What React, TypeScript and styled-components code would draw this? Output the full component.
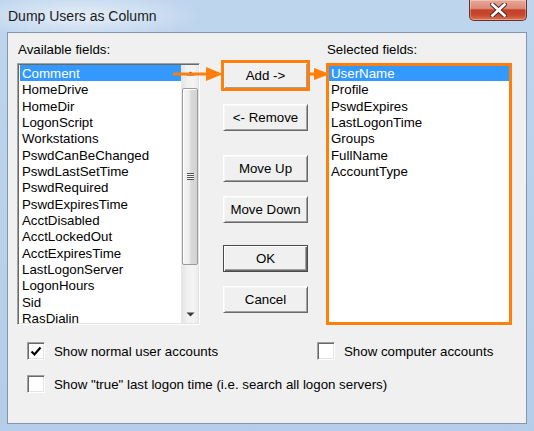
import React from "react";
import styled, { createGlobalStyle, css } from "styled-components";

const availableFields = [
  "Comment",
  "HomeDrive",
  "HomeDir",
  "LogonScript",
  "Workstations",
  "PswdCanBeChanged",
  "PswdLastSetTime",
  "PswdRequired",
  "PswdExpiresTime",
  "AcctDisabled",
  "AcctLockedOut",
  "AcctExpiresTime",
  "LastLogonServer",
  "LogonHours",
  "Sid",
  "RasDialin",
];

const selectedFields = [
  "UserName",
  "Profile",
  "PswdExpires",
  "LastLogonTime",
  "Groups",
  "FullName",
  "AccountType",
];

const ORANGE = "#ff7f0a";

const GlobalStyle = createGlobalStyle`
  html, body {
    margin: 0;
    padding: 0;
  }
  body {
    background: #b9d1ea;
    font-family: "Liberation Sans", Arial, sans-serif;
  }
`;

const Window = styled.div`
  width: 534px;
  height: 431px;
  display: flex;
  flex-direction: column;
  overflow: hidden;
  background: linear-gradient(180deg, #bed5ee 0%, #b9d1ea 45%, #b5cde8 100%);
`;

const TitleBar = styled.div`
  height: 32px;
  flex: none;
  display: flex;
  justify-content: space-between;
  align-items: flex-start;
  padding: 0 7px 0 8px;
  background: radial-gradient(
    ellipse 120px 24px at 82px 16px,
    rgba(255, 255, 255, 0.6),
    rgba(255, 255, 255, 0) 100%
  );
`;

const Title = styled.span`
  margin-top: 8px;
  font-size: 14px;
  line-height: 16px;
  color: #1b1b1b;
`;

const CloseButton = styled.div`
  width: 58px;
  height: 21px;
  box-sizing: border-box;
  display: flex;
  align-items: center;
  justify-content: center;
  border: 1px solid #6e3024;
  border-top: none;
  border-radius: 0 0 5px 5px;
  background: linear-gradient(
    180deg,
    #e8a897 0%,
    #dc8a77 42%,
    #c3412a 50%,
    #c8472e 75%,
    #df7455 100%
  );
  box-shadow: inset 0 0 0 1px rgba(255, 255, 255, 0.3);
`;

const Client = styled.div`
  position: relative;
  flex: 1;
  margin: 0 7px 7px;
  border: 1px solid #8595aa;
  background: #f0f0f0;
  padding: 9px 14px 0 9px;
  display: flex;
  flex-direction: column;
`;

const FieldsGrid = styled.div`
  display: grid;
  grid-template-columns: 183px 1fr 186px;
  grid-template-areas:
    "availLabel . selLabel"
    "availList buttons selList";
  row-gap: 5px;
`;

const FieldLabel = styled.div<{ $area: string }>`
  grid-area: ${(p) => p.$area};
  padding-left: 1px;
  font-size: 13.3px;
  line-height: 16px;
  color: #000;
`;

const ListBox = styled.div<{ $area: string; $marked?: boolean }>`
  grid-area: ${(p) => p.$area};
  height: 262px;
  box-sizing: border-box;
  display: flex;
  overflow: hidden;
  background: #fff;
  border: 1px solid;
  border-color: #a0a0a0 #ffffff #ffffff #a0a0a0;
  box-shadow: inset 1px 1px 0 #696969, inset -1px -1px 0 #e3e3e3;
  padding: 1px;
  ${(p) =>
    p.$marked &&
    css`
      outline: 3px solid ${ORANGE};
      outline-offset: -3px;
    `}
`;

const Items = styled.div`
  flex: 1;
  min-width: 0;
  overflow: hidden;
`;

const Item = styled.div<{ $selected?: boolean }>`
  height: 16.33px;
  line-height: 18px;
  overflow: hidden;
  margin-left: 1px;
  padding-left: 2px;
  font-size: 13.3px;
  white-space: nowrap;
  color: ${(p) => (p.$selected ? "#fff" : "#000")};
  background: ${(p) => (p.$selected ? "#3399ff" : "transparent")};
`;

const ScrollBar = styled.div`
  width: 17px;
  flex: none;
  display: flex;
  flex-direction: column;
  background: linear-gradient(90deg, #e4e4e4 0%, #f1f1f1 30%, #f4f4f4 70%, #ebebeb 100%);
  border-left: 1px solid #e8e8e8;
  box-sizing: border-box;
`;

const ArrowCell = styled.div`
  height: 17px;
  flex: none;
  display: flex;
  align-items: center;
  justify-content: center;
`;

const Track = styled.div`
  flex: 1;
  padding-top: 6px;
`;

const Thumb = styled.div`
  height: 177px;
  box-sizing: border-box;
  border: 1px solid #9b9b9b;
  border-radius: 2px;
  background: linear-gradient(90deg, #f5f5f5 0%, #ececec 45%, #dadada 55%, #d2d2d2 100%);
  box-shadow: inset 1px 1px 0 #ffffff;
  display: flex;
  align-items: center;
  justify-content: center;
`;

const Grip = styled.div`
  width: 7px;
  height: 7px;
  background: repeating-linear-gradient(180deg, #555 0px, #555 1px, #f4f4f4 1px, #f4f4f4 2px);
`;

const ButtonColumn = styled.div`
  grid-area: buttons;
  display: flex;
  flex-direction: column;
  align-items: flex-start;
  padding-left: 23px;
`;

const DialogButton = styled.button<{ $gap: number; $default?: boolean; $marked?: boolean }>`
  width: 85px;
  height: 27px;
  margin-top: ${(p) => p.$gap}px;
  padding: 0;
  font-family: "Liberation Sans", Arial, sans-serif;
  font-size: 13.3px;
  color: #000;
  background: #f0f0f0;
  border: 1px solid;
  border-color: #ffffff #696969 #696969 #ffffff;
  box-shadow: inset 1px 1px 0 #f7f7f7, inset -1px -1px 0 #a0a0a0;
  ${(p) =>
    p.$default &&
    css`
      border: 1px solid #4a4a4a;
      box-shadow: inset 1px 1px 0 #ffffff, inset -1px -1px 0 #696969,
        inset -2px -2px 0 #a0a0a0;
    `}
  ${(p) =>
    p.$marked &&
    css`
      outline: 3px solid ${ORANGE};
      outline-offset: -1px;
    `}
`;

const Options = styled.div`
  display: flex;
  flex-direction: column;
  gap: 15px;
  padding: 17px 0 0 10px;
`;

const OptionRow = styled.div`
  display: flex;
`;

const Option = styled.label<{ $width?: number }>`
  display: flex;
  align-items: center;
  gap: 9px;
  width: ${(p) => (p.$width ? `${p.$width}px` : "auto")};
  font-size: 13.3px;
  line-height: 17px;
  color: #000;
  white-space: nowrap;
`;

const CheckBox = styled.span`
  width: 18px;
  height: 18px;
  flex: none;
  box-sizing: border-box;
  display: flex;
  align-items: center;
  justify-content: center;
  background: #fff;
  border: 1px solid;
  border-color: #a0a0a0 #ffffff #ffffff #a0a0a0;
  box-shadow: inset 1px 1px 0 #696969, inset -1px -1px 0 #e3e3e3;
`;

const Overlay = styled.svg`
  position: absolute;
  top: 0;
  left: 0;
  width: 100%;
  height: 100%;
  pointer-events: none;
`;

const Triangle = ({ down }: { down?: boolean }) => (
  <svg width="9" height="5" viewBox="0 0 9 5">
    <polygon points={down ? "0.5,0.5 8.5,0.5 4.5,4.5" : "0.5,4.5 8.5,4.5 4.5,0.5"} fill="#3c3c3c" />
  </svg>
);

const Check = () => (
  <svg width="12" height="11" viewBox="0 0 12 11">
    <polyline points="1.5,5.5 4.5,8.5 10.5,1.5" fill="none" stroke="#000" strokeWidth="2.2" />
  </svg>
);

const OptionBox = ({ label, checked, width }: { label: string; checked?: boolean; width?: number }) => (
  <Option $width={width}>
    <CheckBox>{checked && <Check />}</CheckBox>
    {label}
  </Option>
);

export default function App() {
  return (
    <>
      <GlobalStyle />
      <Window>
        <TitleBar>
          <Title>Dump Users as Column</Title>
          <CloseButton>
            <svg width="17" height="14" viewBox="0 0 17 14">
              <path
                d="M2.5 1.5 L14.5 12.5 M14.5 1.5 L2.5 12.5"
                stroke="#4b2119"
                strokeWidth="4.6"
                strokeLinecap="square"
              />
              <path
                d="M2.5 1.5 L14.5 12.5 M14.5 1.5 L2.5 12.5"
                stroke="#ffffff"
                strokeWidth="2.8"
                strokeLinecap="square"
              />
            </svg>
          </CloseButton>
        </TitleBar>
        <Client>
          <FieldsGrid>
            <FieldLabel $area="availLabel">Available fields:</FieldLabel>
            <FieldLabel $area="selLabel">Selected fields:</FieldLabel>
            <ListBox $area="availList">
              <Items>
                {availableFields.map((f, i) => (
                  <Item key={f} $selected={i === 0}>
                    {f}
                  </Item>
                ))}
              </Items>
              <ScrollBar>
                <ArrowCell>
                  <Triangle />
                </ArrowCell>
                <Track>
                  <Thumb>
                    <Grip />
                  </Thumb>
                </Track>
                <ArrowCell>
                  <Triangle down />
                </ArrowCell>
              </ScrollBar>
            </ListBox>
            <ButtonColumn>
              <DialogButton $gap={-1} $marked>
                Add -&gt;
              </DialogButton>
              <DialogButton $gap={15}>&lt;- Remove</DialogButton>
              <DialogButton $gap={24}>Move Up</DialogButton>
              <DialogButton $gap={14}>Move Down</DialogButton>
              <DialogButton $gap={22} $default>
                OK
              </DialogButton>
              <DialogButton $gap={14}>Cancel</DialogButton>
            </ButtonColumn>
            <ListBox $area="selList" $marked>
              <Items>
                {selectedFields.map((f, i) => (
                  <Item key={f} $selected={i === 0}>
                    {f}
                  </Item>
                ))}
              </Items>
            </ListBox>
          </FieldsGrid>
          <Options>
            <OptionRow>
              <OptionBox label="Show normal user accounts" checked width={290} />
              <OptionBox label="Show computer accounts" />
            </OptionRow>
            <OptionRow>
              <OptionBox label={'Show "true" last logon time (i.e. search all logon servers)'} />
            </OptionRow>
          </Options>
          <Overlay>
            <line x1="165" y1="41" x2="200" y2="41" stroke={ORANGE} strokeWidth="3" />
            <polygon points="198,34 215,41 198,48" fill={ORANGE} />
            <line x1="301" y1="41" x2="308" y2="41" stroke={ORANGE} strokeWidth="3" />
            <polygon points="306,35 322,41 306,47" fill={ORANGE} />
          </Overlay>
        </Client>
      </Window>
    </>
  );
}
